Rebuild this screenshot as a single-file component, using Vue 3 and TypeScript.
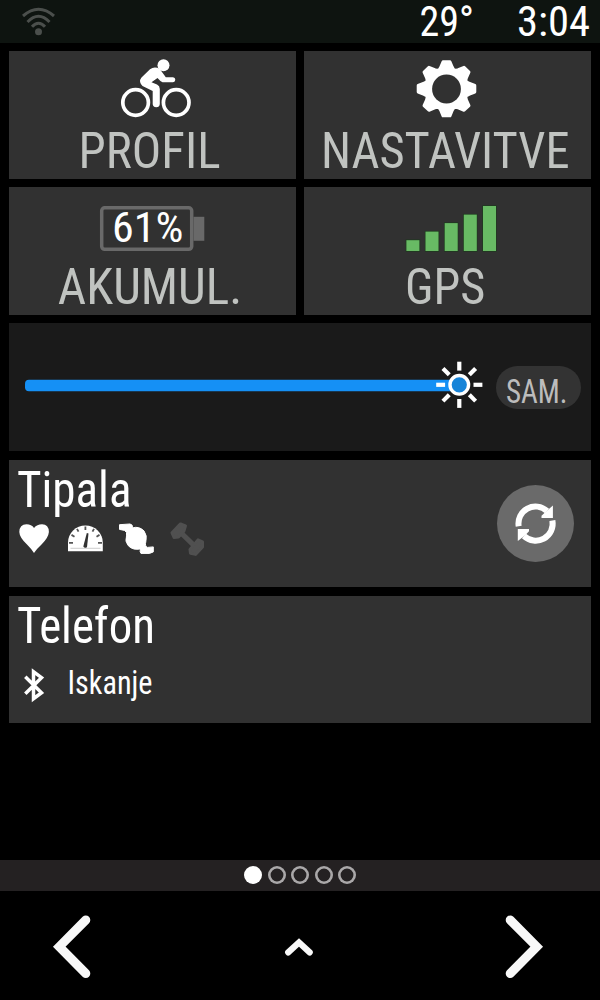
<script setup lang="ts">
interface Label {
  text: string
  x: number
  width: number
}

const profile: Label = { text: 'PROFIL', x: 69.5, width: 142 }
const settings: Label = { text: 'NASTAVITVE', x: 17, width: 248.5 }
const battery: Label = { text: 'AKUMUL.', x: 48.8, width: 184.5 }
const gps: Label = { text: 'GPS', x: 101, width: 80.3 }

const bars = [
  { x: 406.4, y: 240.4 },
  { x: 425.5, y: 231.8 },
  { x: 444.7, y: 223.3 },
  { x: 463.8, y: 214.8 },
  { x: 483, y: 206.2 },
]

const rays = [0, 45, 90, 135, 180, 225, 270, 315]
const pages = [true, false, false, false, false]

function gearPath(cx: number, cy: number): string {
  const points: string[] = []
  const add = (radius: number, degrees: number) => {
    const a = (degrees * Math.PI) / 180
    points.push(`${(cx + radius * Math.cos(a)).toFixed(2)} ${(cy + radius * 0.955 * Math.sin(a)).toFixed(2)}`)
  }
  for (let i = 0; i < 8; i++) {
    const a = i * 45
    add(21.3, a - 20)
    add(23.2, a - 14.5)
    add(28.5, a - 7)
    add(28.5, a + 7)
    add(23.2, a + 14.5)
    add(21.3, a + 20)
  }
  return `M${points.join('L')}Z`
}

const gear = gearPath(446.5, 88.8)
</script>

<template>
  <main class="screen">
    <header class="status">
      <svg class="wifi" width="60" height="42" viewBox="0 0 60 42">
        <path d="M23 16Q38.5 2.500 54 16M27.500 22Q38.500 10.500 49.500 22M32 26.800Q38.500 19.500 45 26.800" />
        <circle cx="38.500" cy="31.800" r="3.500" />
      </svg>
      <svg class="readout" width="200" height="42" viewBox="400 0 200 42">
        <text x="419.500" y="36.300" textLength="54.500" lengthAdjust="spacingAndGlyphs">29°</text>
        <text x="517" y="36.300" textLength="73" lengthAdjust="spacingAndGlyphs">3:04</text>
      </svg>
    </header>

    <section class="grid">
      <div class="tile">
        <svg class="art" width="287" height="70" viewBox="9 51 287 70">
          <g class="wheels">
            <circle cx="135.600" cy="102.500" r="12.800" />
            <circle cx="176.200" cy="102.500" r="12.800" />
          </g>
          <circle cx="163.500" cy="65.200" r="6" fill="#fff" />
          <path fill="#fff" d="M150 69.300Q154.500 66 159.800 69L165.800 77.200H173Q175.300 77.500 175.300 79.800Q175.300 82.200 173 82.200H162.500Q160.500 81.600 157.500 78L151.500 82.300L157 84.600Q159.800 86 159.800 89V104Q159.500 107.200 156.300 107.200Q152.700 107 152.700 104V91L142.500 86Q138.200 81.500 141.500 77.500Z" />
        </svg>
        <svg class="label" width="287" height="57">
          <text :x="profile.x" y="47" :textLength="profile.width" lengthAdjust="spacingAndGlyphs">{{ profile.text }}</text>
        </svg>
      </div>
      <div class="tile">
        <svg class="art" width="287" height="70" viewBox="304 51 287 70">
          <path :d="gear" fill="#fff" stroke="#fff" stroke-width="3" stroke-linejoin="round" />
          <circle cx="446.500" cy="89" r="14.400" fill="#313131" />
        </svg>
        <svg class="label" width="287" height="57">
          <text :x="settings.x" y="47" :textLength="settings.width" lengthAdjust="spacingAndGlyphs">{{ settings.text }}</text>
        </svg>
      </div>
      <div class="tile">
        <svg class="art" width="287" height="70" viewBox="9 187.200 287 70">
          <rect x="101.700" y="208" width="90" height="41.500" rx="3" fill="none" stroke="#696969" stroke-width="3.500" />
          <rect x="193.500" y="217" width="10.800" height="24" fill="#696969" />
          <text class="percent" x="112" y="242.300" textLength="71.500" lengthAdjust="spacingAndGlyphs">61%</text>
        </svg>
        <svg class="label" width="287" height="57">
          <text :x="battery.x" y="47" :textLength="battery.width" lengthAdjust="spacingAndGlyphs">{{ battery.text }}</text>
        </svg>
      </div>
      <div class="tile">
        <svg class="art" width="287" height="70" viewBox="304 187.200 287 70">
          <rect v-for="bar in bars" :key="bar.x" :x="bar.x" :y="bar.y" width="13" :height="251.2 - bar.y" fill="#68ba64" stroke="#1d3a1d" stroke-width="1.400" paint-order="stroke" />
        </svg>
        <svg class="label" width="287" height="57">
          <text :x="gps.x" y="47" :textLength="gps.width" lengthAdjust="spacingAndGlyphs">{{ gps.text }}</text>
        </svg>
      </div>

      <div class="tile wide brightness">
        <svg width="487" height="127.600" viewBox="9 323.400 487 127.600">
          <rect x="25" y="380.200" width="434" height="11.400" rx="4" fill="#1590f5" />
          <circle cx="459.300" cy="385.200" r="9.300" fill="#1784d8" stroke="#fff" stroke-width="3.400" />
          <g stroke="#fff" stroke-width="4.200">
            <path v-for="ray in rays" :key="ray" d="M473.500 385.200H482.400" :transform="`rotate(${ray} 459.300 385.200)`" />
          </g>
        </svg>
        <div class="pill">
          <svg width="85" height="43" viewBox="496 365.700 85 43">
            <text x="506" y="402.500" textLength="61.500" lengthAdjust="spacingAndGlyphs">SAM.</text>
          </svg>
        </div>
      </div>

      <div class="tile wide sensors">
        <svg width="240" height="127.600" viewBox="9 459.600 240 127.600">
          <text class="heading" x="17" y="506.300" textLength="114.500" lengthAdjust="spacingAndGlyphs">Tipala</text>
          <path fill="#fff" d="M34 552.500Q31.500 548.500 27 544Q19.500 537 19.300 531.500Q19.500 524 26.500 523.800Q31.500 523.800 34 527.500Q37 523.800 42 523.800Q48.800 524 48.900 531.500Q48.500 537 41.500 544Q36.500 548.500 34 552.500Z" />
          <path fill="#fff" d="M68 550.800V542A17.400 17 0 0 1 102.800 542V550.800Z" />
          <g stroke="#555" fill="none">
            <path stroke-width="1.800" d="M85.400 526V529.500M77 528.500L78.500 531.300M94 528.500L92.500 531.300M71.500 534.500L74.500 536.300M99.500 534.500L96.500 536.300M69 542.500H73M98 542.500H102" />
            <path stroke-width="1" d="M70.500 547.900H100.500" stroke="#ccc" />
          </g>
          <path fill="#313131" d="M86.800 532.500L88.500 533L87 546.500Q85 548.600 83.300 546Z" />
          <path fill="#fff" stroke="#fff" stroke-width="1" stroke-linejoin="round" d="M119.500 524.300L130 523.600Q133 524 132.500 527.500Q139 525.500 144 530.500Q147.500 535 145.800 541.500Q144.500 545.500 147.500 547L153.300 546.500V551.500L149.500 553H141Q139.500 551.500 140.500 548.500Q133 550 128.500 545.500Q124.500 541 126.500 535.500Q127.500 531.500 124.500 530L119.500 529Z" />
          <g fill="#505050" stroke="#505050" stroke-linejoin="round" stroke-linecap="round">
            <path stroke-width="5" d="M179 530.500L196 547" />
            <path stroke-width="3" d="M172 532.500L180.500 523.500L185.500 525.500L184 530.500L178.500 536.500L174 537ZM190 549L198 539.500L202.500 541.500L202.500 546.500L195.500 554L190.500 553Z" />
          </g>
        </svg>
        <div class="sync">
          <svg width="77" height="77" viewBox="-38.500 -38.500 77 77">
            <g fill="none" stroke="#fff" stroke-width="6">
              <path d="M-16.800 2.800A17 17 0 0 1 11.500 -12.500" />
              <path d="M16.900 -3A17 17 0 0 1 -11.500 12.500" />
            </g>
            <path fill="#fff" d="M17.400 -18V-5.400H6V-7.800L10 -11.500ZM-17.700 17.500V5.400H-6.500V7.800L-10 11.500Z" />
          </svg>
        </div>
      </div>

      <div class="tile wide">
        <svg width="240" height="127.600" viewBox="9 595.800 240 127.600">
          <text class="heading" x="17" y="642.600" textLength="138" lengthAdjust="spacingAndGlyphs">Telefon</text>
          <path fill="none" stroke="#fff" stroke-width="3.500" d="M25.300 676.500L41.500 692.500L33.500 698.500V671.500L41.500 677.500L25.300 693.500" />
          <text class="state" x="67.500" y="693.400" textLength="85" lengthAdjust="spacingAndGlyphs">Iskanje</text>
        </svg>
      </div>
    </section>

    <footer class="footer">
      <div class="pager">
        <span v-for="(active, i) in pages" :key="i" class="dot" :class="{ active }"></span>
      </div>
      <nav class="nav">
        <svg width="600" height="109" viewBox="0 891 600 109" fill="none" stroke="#f8f8f8" stroke-linecap="round">
          <path stroke-width="9" d="M85.800 920L59.300 946.700L85.800 973.500" />
          <path stroke-width="6.200" d="M288.200 952.400L299 942.500L309.700 952.400" />
          <path stroke-width="9" d="M510.200 920L536.700 946.700L510.200 973.500" />
        </svg>
      </nav>
    </footer>
  </main>
</template>

<style>
body {
  margin: 0;
  background: #000;
}
</style>

<style scoped>
.screen {
  display: flex;
  flex-direction: column;
  width: 600px;
  height: 1000px;
  background: #000;
  font-family: "Roboto Condensed", Roboto, "Liberation Sans", sans-serif;
  font-stretch: condensed;
}

svg {
  display: block;
  flex: none;
  overflow: visible;
}

.status {
  display: flex;
  justify-content: space-between;
  height: 42.5px;
  background: #0e1410;
}

.wifi path {
  fill: none;
  stroke: #4b4f4c;
  stroke-width: 3;
}

.wifi circle {
  fill: #4b4f4c;
}

.readout text {
  font-size: 43px;
  fill: #fff;
}

.grid {
  display: grid;
  grid-template-columns: 1fr 1fr;
  grid-auto-rows: 127.6px;
  gap: 8.6px 8.5px;
  padding: 8.5px 8.7px 0;
}

.tile {
  background: #313131;
}

.wide {
  grid-column: span 2;
}

.wheels {
  fill: none;
  stroke: #fff;
  stroke-width: 3.7;
}

.label text {
  font-size: 50.5px;
  fill: #c0c3c0;
}

.percent {
  font-size: 42px;
  fill: #fff;
}

.brightness {
  display: flex;
  align-items: center;
  background: #1a1a1a;
}

.pill {
  width: 85px;
  height: 43px;
  border-radius: 22px;
  background: #333;
}

.pill text {
  font-size: 33px;
  fill: #bcbcbc;
}

.sensors {
  display: flex;
  align-items: center;
  justify-content: space-between;
  padding-right: 17px;
}

.sync {
  width: 77px;
  height: 77px;
  border-radius: 50%;
  background: #6a6a6a;
}

.heading {
  font-size: 50.5px;
  fill: #fff;
}

.state {
  font-size: 32.5px;
  fill: #fff;
}

.footer {
  margin-top: auto;
}

.pager {
  display: flex;
  align-items: center;
  justify-content: center;
  gap: 5.5px;
  height: 31.5px;
  background: #242122;
}

.dot {
  width: 18px;
  height: 18px;
  border-radius: 50%;
  box-shadow: inset 0 0 0 2.6px #aaa8a9;
}

.dot.active {
  background: #fff;
  box-shadow: none;
}

.nav {
  height: 109px;
}
</style>
